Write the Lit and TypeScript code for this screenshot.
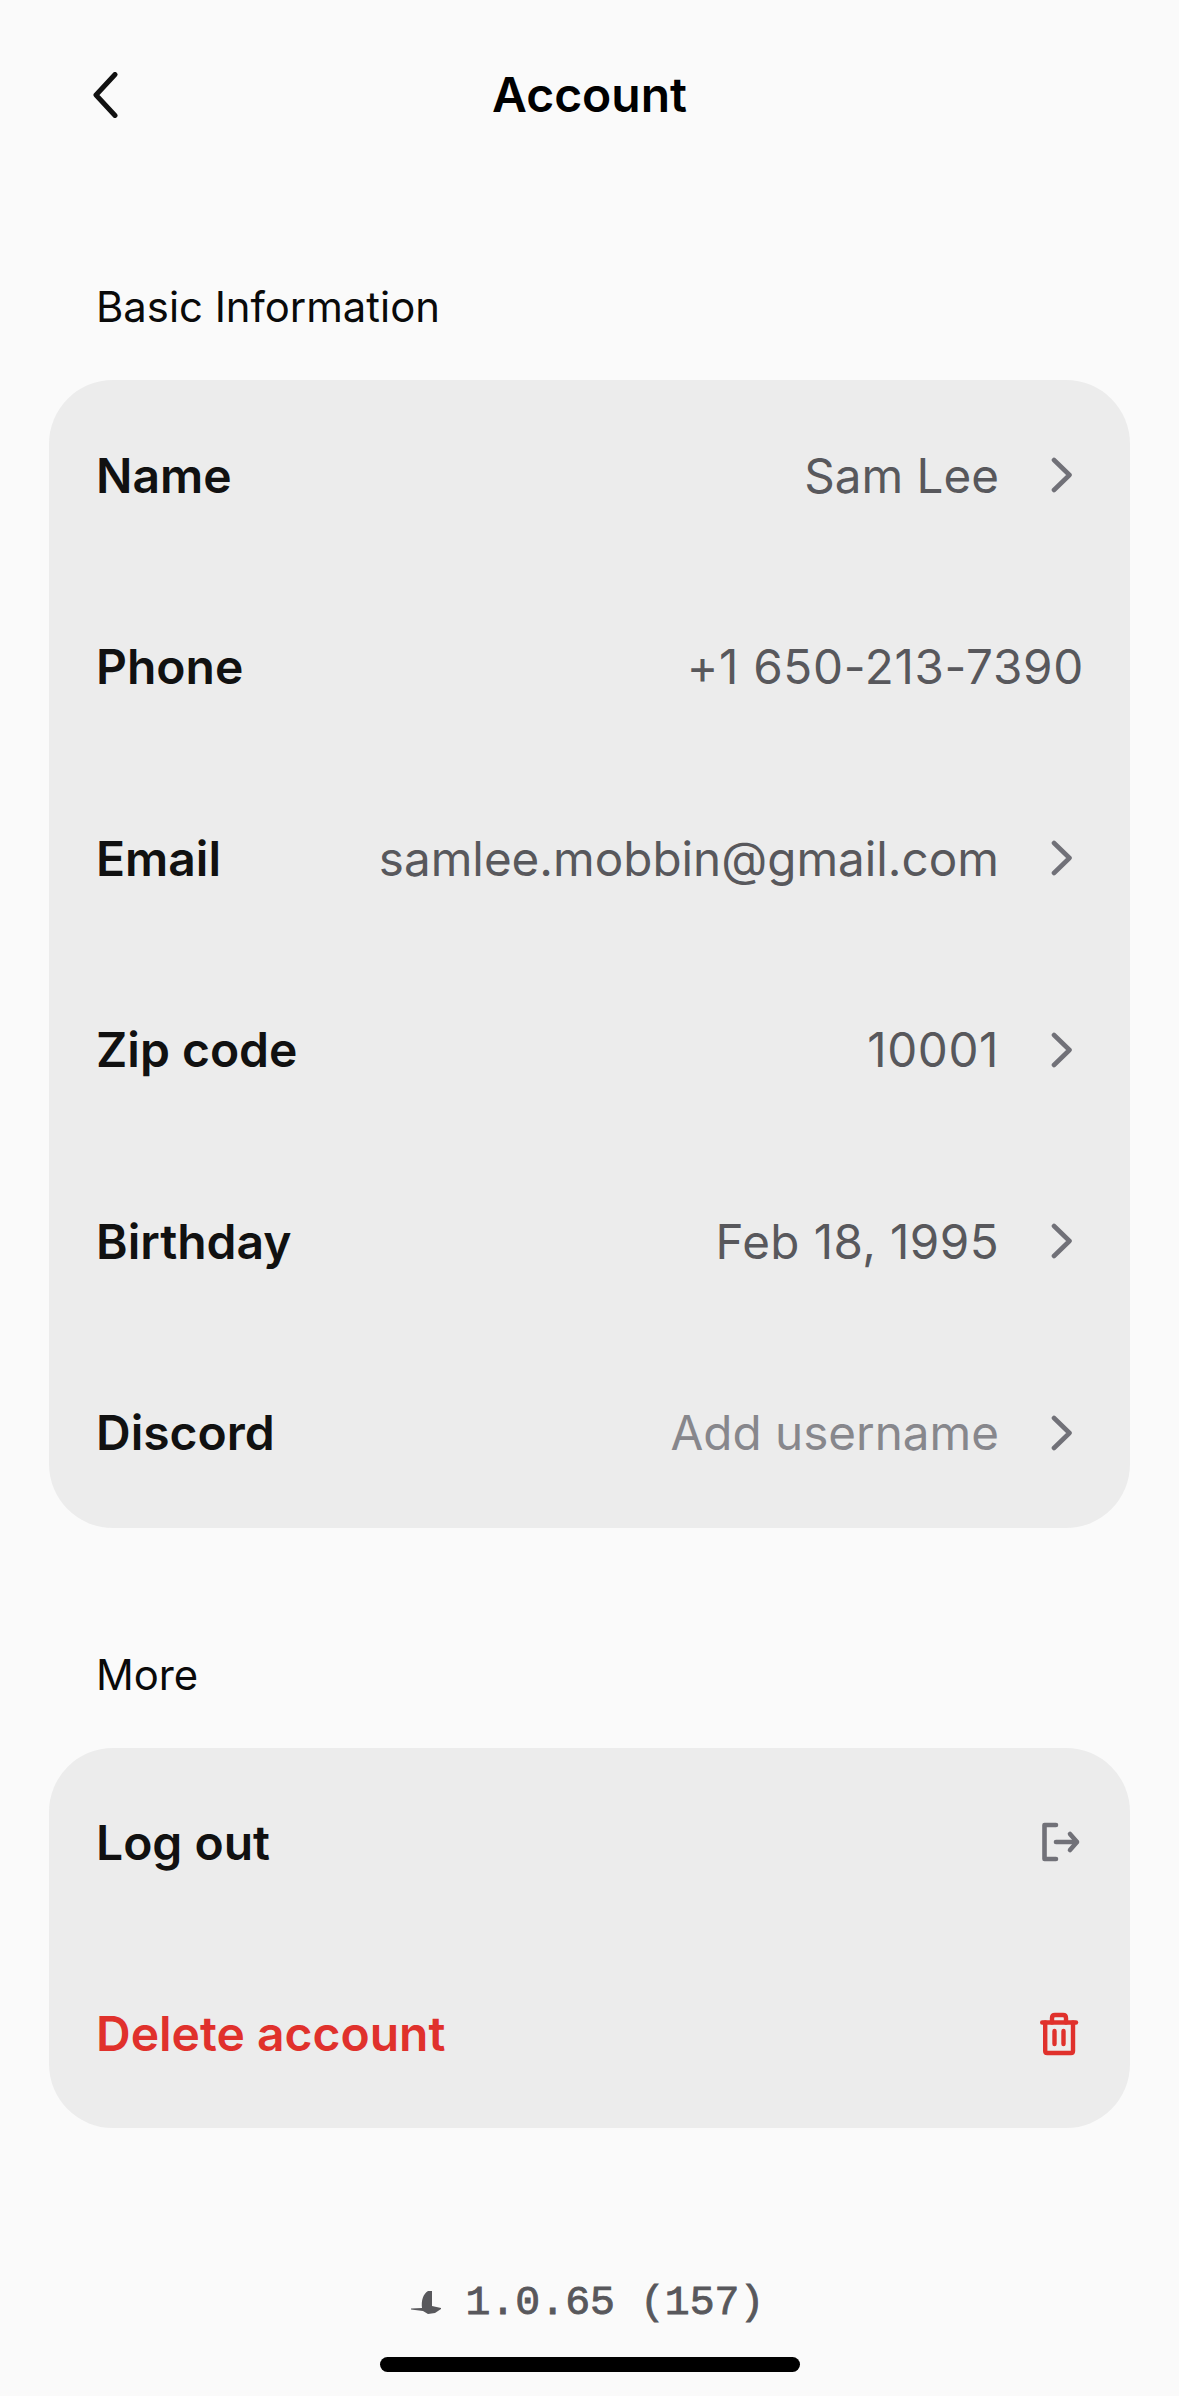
import { LitElement, html, css, svg } from "lit";
import { customElement } from "lit/decorators.js";

const chevron = html`<svg class="chev" viewBox="0 0 24 36" fill="none" stroke="#717178" stroke-width="4.6" stroke-linecap="round" stroke-linejoin="round"><path d="M4 3 L19.5 18 L4 33"/></svg>`;

interface Row { label: string; value: string; cls?: string; chevron: boolean; }
const rows: Row[] = [
  { label: "Name", value: "Sam Lee", chevron: true },
  { label: "Phone", value: "+1 650-213-7390", cls: "phone", chevron: false },
  { label: "Email", value: "samlee.mobbin@gmail.com", chevron: true },
  { label: "Zip code", value: "10001", cls: "num", chevron: true },
  { label: "Birthday", value: "Feb 18, 1995", cls: "date", chevron: true },
  { label: "Discord", value: "Add username", cls: "muted", chevron: true },
];

@customElement("app-root")
export class AppRoot extends LitElement {
  static styles = css`
    :host { display: block; width: 1179px; height: 2396px; background: #fafafa; font-family: Inter, "Liberation Sans", sans-serif; color: #111; overflow: hidden; }
    .page { display: flex; flex-direction: column; height: 2396px; padding: 0 49px 24px; box-sizing: border-box; }
    .header { height: 190px; flex: none; display: grid; grid-template-columns: 1fr auto 1fr; align-items: center; }
    .back { width: 30px; height: 46px; display: block; margin-left: 42px; }
    .title { font-size: 48px; font-weight: 600; color: #000; line-height: 190px; }
    .section { font-size: 41.8px; font-weight: 400; color: #0a0a0a; padding-left: 47px; line-height: 60px; }
    .s1 { margin-top: 87px; margin-bottom: 43px; }
    .s2 { margin-top: 117px; margin-bottom: 43px; }
    .card { background: #ececec; border-radius: 64px; display: flex; flex-direction: column; flex: none; height: 1148px; justify-content: center; }
    .card.compact { gap: 3px; height: 380px; }
    .row { height: 191.6px; display: flex; align-items: center; padding: 0 46px 0 47px; flex: none; }
    .compact .row { height: 188.5px; }
    .label { font-size: 48px; font-weight: 600; color: #111; flex: 1; white-space: nowrap; }
    .value { font-size: 47.6px; font-weight: 400; color: #58585c; white-space: nowrap; }
    .muted { color: #87878c; }
    .phone { letter-spacing: 0.7px; }
    .num { letter-spacing: 0.6px; }
    .date { letter-spacing: 0.4px; }
    .chev { width: 24px; height: 36px; margin-left: 50.5px; margin-right: 10.5px; flex: none; display: block; }
    .danger { color: #e0312c; }
    .icon { width: 44px; height: 44px; flex: none; display: block; }
    .footer { margin-top: auto; display: flex; flex-direction: column; align-items: center; }
    .version { display: flex; align-items: center; gap: 25px; font-family: "Liberation Mono", monospace; font-size: 41.5px; color: #58585c; font-weight: 400; line-height: 50px; -webkit-text-stroke: 0.9px #58585c; margin-left: -4px; }
    .bird { width: 30px; height: 24px; flex: none; display: block; }
    .home { margin-top: 29px; width: 420px; height: 15px; border-radius: 8px; background: #000; }
  `;

  render() {
    return html`
      <div class="page">
        <div class="header">
          <svg class="back" viewBox="0 0 30 46" fill="none" stroke="#111" stroke-width="5" stroke-linecap="round" stroke-linejoin="round"><path d="M24 2.5 L5 23 L24 43.5"/></svg>
          <div class="title">Account</div>
          <div></div>
        </div>
        <div class="section s1">Basic Information</div>
        <div class="card">
          ${rows.map((r) => html`
            <div class="row">
              <div class="label">${r.label}</div>
              <div class="value ${r.cls ?? ""}">${r.value}</div>
              ${r.chevron ? chevron : ""}
            </div>`)}
        </div>
        <div class="section s2">More</div>
        <div class="card compact">
          <div class="row">
            <div class="label">Log out</div>
            <svg class="icon" viewBox="0 0 44 44" fill="none" stroke="#717178" stroke-width="4.6" stroke-linecap="round" stroke-linejoin="round">
              ${svg`<path d="M16 5 H4.5 V39 H16"/><path d="M16 22 H36.5"/><path d="M30 14 L37 22 L30 30"/>`}
            </svg>
          </div>
          <div class="row">
            <div class="label danger">Delete account</div>
            <svg class="icon" viewBox="0 0 44 44" fill="none" stroke="#e0312c" stroke-width="4.4" stroke-linecap="round" stroke-linejoin="round">
              ${svg`<path d="M2.2 10.5 H36"/><path d="M5.2 10.5 V39 Q5.2 41 7.2 41 H31 Q33 41 33 39 V10.5"/><path d="M12 10.5 V6 Q12 3 15 3 H23 Q26 3 26 6 V10.5"/><path d="M14.5 19 V32"/><path d="M23.5 19 V32"/>`}
            </svg>
          </div>
        </div>
        <div class="footer">
          <div class="version">
            <svg class="bird" viewBox="0 0 30 24" fill="#58585c">
              ${svg`<path d="M17 0 H21 V15 L30 17 V18 L24 22 L17 23 L12 20 L0 18.5 V17.5 L11 17 C10 10 12 3 17 0 Z"/>`}
            </svg>
            <span>1.0.65 (157)</span>
          </div>
          <div class="home"></div>
        </div>
      </div>
    `;
  }
}
